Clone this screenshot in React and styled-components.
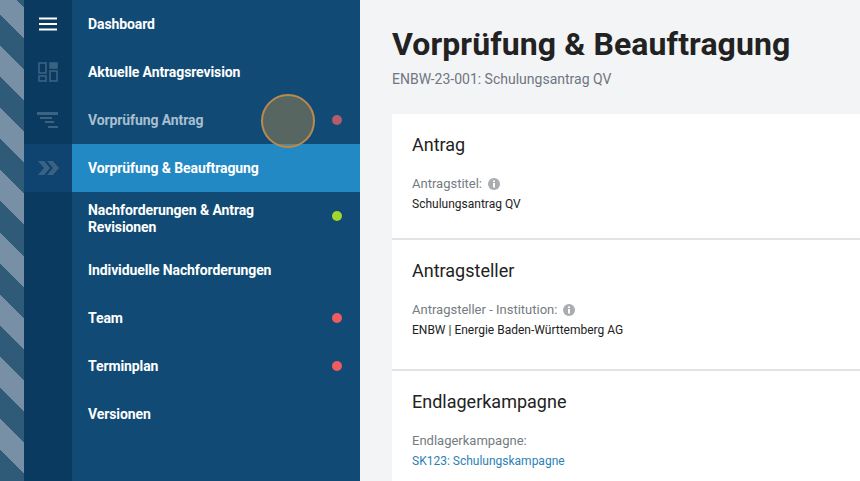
import React from "react";
import styled, { createGlobalStyle } from "styled-components";

const Global = createGlobalStyle`
  html, body { margin: 0; padding: 0; }
  body { width: 860px; height: 481px; overflow: hidden; font-family: Roboto, "Liberation Sans", sans-serif; background: #f3f4f6; }
`;
const Page = styled.div`
  position: relative; display: flex; width: 860px; height: 481px; overflow: hidden;
`;
const Stripes = styled.div`
  width: 24px; flex: none;
  background: repeating-linear-gradient(45deg, #2f5a78 0 22px, #7790a5 22px 44px);
  background-position: 0 0;
`;
const Rail = styled.div`
  width: 48px; flex: none; background: #0b3a60; display: flex; flex-direction: column;
`;
const RailItem = styled.div`
  height: 48px; display: flex; align-items: center; justify-content: center;
  background: ${p => (p.$active ? "#104470" : "transparent")};
`;
const Nav = styled.nav`
  width: 288px; flex: none; background: #114b75; display: flex; flex-direction: column;
`;
const NavRow = styled.div`
  display: flex; align-items: center; justify-content: space-between;
  min-height: ${p => (p.$tall ? "54px" : "48px")};
  box-sizing: border-box; padding: 0 18px 0 16px;
  background: ${p => (p.$active ? "#2389c4" : "transparent")};
  color: ${p => (p.$muted ? "#a9bfd0" : "#fff")};
  font-size: 14px; font-weight: 700; line-height: 17px; letter-spacing: -0.1px;
`;
const Label = styled.span` width: 190px; `;
const Dot = styled.span`
  width: 10px; height: 10px; border-radius: 50%; background: ${p => p.$color}; flex: none;
  margin-top: ${p => p.$shift || 0}px;
`;
const Highlight = styled.div`
  position: absolute; left: 261px; top: 94px; width: 54px; height: 54px; box-sizing: border-box;
  border-radius: 50%; border: 2px solid #b98a4e; background: rgba(160,130,80,0.5);
`;
const Main = styled.main`
  flex: 1; min-width: 0; padding: 0 0 0 32px; background: #f3f4f6;
`;
const Title = styled.h1`
  margin: 0; padding-top: 25px; font-size: 32px; line-height: 38px; font-weight: 700; color: #222; letter-spacing: 0.1px;
`;
const Subtitle = styled.div`
  margin-top: 8px; font-size: 14px; line-height: 17px; color: #6f7680;
`;
const Cards = styled.div` margin-top: 26px; display: flex; flex-direction: column; `;
const Card = styled.section`
  background: #fff; padding: 20px 20px 0; height: ${p => p.$h}px; box-sizing: border-box;
  border-bottom: 2px solid #e2e3e5;
`;
const CardTitle = styled.h2`
  margin: 0; font-size: 18px; line-height: 22px; font-weight: 400; color: #222;
`;
const FieldLabel = styled.div`
  margin-top: 20px; font-size: 13px; line-height: 16px; color: #757b82; display: flex; align-items: center; gap: 6px;
`;
const Value = styled.div`
  margin-top: 5px; font-size: 12px; line-height: 15px; color: #222;
`;
const LinkValue = styled(Value)` color: #2c7fb5; `;

const Hamburger = () => (
  <svg width="20" height="14" viewBox="0 0 20 14"><path d="M1 1.5h18M1 7h18M1 12.5h18" stroke="#fff" strokeWidth="2" /></svg>
);
const DashIcon = () => (
  <svg width="20" height="20" viewBox="0 0 20 20" fill="none" stroke="#3a6282" strokeWidth="1.6">
    <rect x="1" y="1" width="7" height="10" /><rect x="12" y="1" width="7" height="5" fill="#3a6282" />
    <rect x="1" y="14" width="7" height="5" /><rect x="12" y="9" width="7" height="10" />
  </svg>
);
const BarsIcon = () => (
  <svg width="22" height="16" viewBox="0 0 22 16" fill="#3a6282">
    <rect x="0" y="0" width="21" height="3" /><rect x="3" y="5" width="12" height="2" />
    <rect x="8" y="9" width="9" height="2" /><rect x="11" y="14" width="10" height="2" />
  </svg>
);
const ChevIcon = () => (
  <svg width="21" height="14" viewBox="0 0 21 14" fill="#3a6282">
    <path d="M0 0h6l6 7-6 7H0l6-7zM9 0h6l6 7-6 7H9l6-7z" />
  </svg>
);
const Info = () => (
  <svg width="12" height="12" viewBox="0 0 12 12">
    <circle cx="6" cy="6" r="6" fill="#a9adb2" /><rect x="5" y="5" width="2" height="4.5" fill="#fff" /><rect x="5" y="2.5" width="2" height="1.6" fill="#fff" />
  </svg>
);

export default function App() {
  return (
    <Page>
      <Global />
      <Stripes />
      <Rail>
        <RailItem><Hamburger /></RailItem>
        <RailItem><DashIcon /></RailItem>
        <RailItem><BarsIcon /></RailItem>
        <RailItem $active><ChevIcon /></RailItem>
      </Rail>
      <Nav>
        <NavRow><Label>Dashboard</Label></NavRow>
        <NavRow><Label>Aktuelle Antragsrevision</Label></NavRow>
        <NavRow $muted><Label>Vorprüfung Antrag</Label><Dot $color="#b25c6c" /></NavRow>
        <NavRow $active><Label>Vorprüfung &amp; Beauftragung</Label></NavRow>
        <NavRow $tall><Label>Nachforderungen &amp; Antrag Revisionen</Label><Dot $color="#a3d52f" $shift={-6} /></NavRow>
        <NavRow><Label style={{ width: 220 }}>Individuelle Nachforderungen</Label></NavRow>
        <NavRow><Label>Team</Label><Dot $color="#ee5c62" /></NavRow>
        <NavRow><Label>Terminplan</Label><Dot $color="#ee5c62" /></NavRow>
        <NavRow><Label>Versionen</Label></NavRow>
      </Nav>
      <Main>
        <Title>Vorprüfung &amp; Beauftragung</Title>
        <Subtitle>ENBW-23-001: Schulungsantrag QV</Subtitle>
        <Cards>
          <Card $h={126}>
            <CardTitle>Antrag</CardTitle>
            <FieldLabel>Antragstitel: <Info /></FieldLabel>
            <Value>Schulungsantrag QV</Value>
          </Card>
          <Card $h={131}>
            <CardTitle>Antragsteller</CardTitle>
            <FieldLabel>Antragsteller - Institution: <Info /></FieldLabel>
            <Value>ENBW | Energie Baden-Württemberg AG</Value>
          </Card>
          <Card $h={140}>
            <CardTitle>Endlagerkampagne</CardTitle>
            <FieldLabel>Endlagerkampagne:</FieldLabel>
            <LinkValue>SK123: Schulungskampagne</LinkValue>
          </Card>
        </Cards>
      </Main>
      <Highlight />
    </Page>
  );
}
